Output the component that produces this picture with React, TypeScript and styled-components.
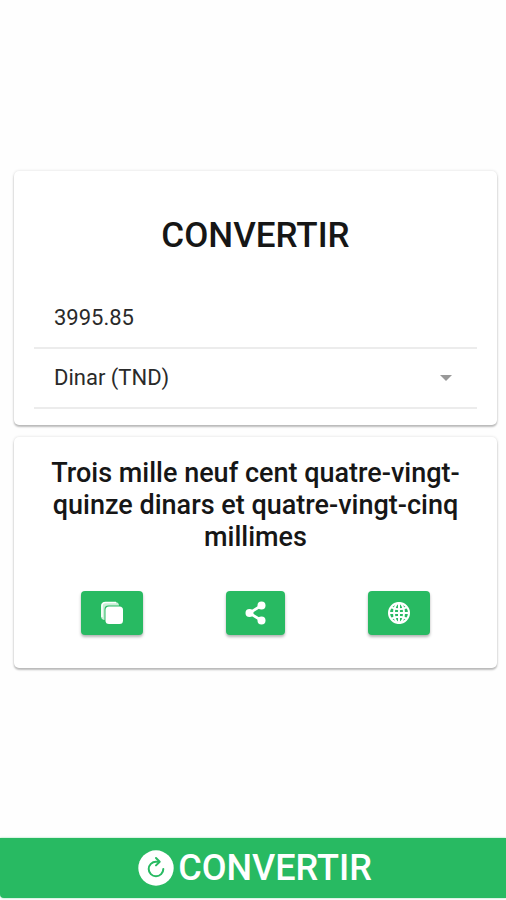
import React, { useState } from "react";
import styled, { createGlobalStyle } from "styled-components";

const green = "#28ba62";

const GlobalStyle = createGlobalStyle`
  *, *::before, *::after { box-sizing: border-box; }
  body {
    margin: 0;
    background: #fefefe;
    color: #161616;
    font-family: Roboto, "Liberation Sans", sans-serif;
  }
`;

const Page = styled.div`
  display: flex;
  flex-direction: column;
  min-height: 100vh;
  padding-bottom: 2px;
`;

const Content = styled.main`
  flex: 1;
  display: flex;
  flex-direction: column;
  justify-content: center;
  gap: 12px;
  padding: 0 9px 0 14px;
`;

const Card = styled.section`
  background: #fff;
  border-radius: 5px;
  box-shadow: 0 2px 2px rgba(0, 0, 0, 0.24), 0 0 3px rgba(0, 0, 0, 0.14);
`;

const FormCard = styled(Card)`
  padding: 44px 20px 16px;
`;

const ResultCard = styled(Card)`
  padding: 20px 26px 33px;
`;

const Title = styled.h1`
  margin: 0 0 32px;
  font-size: 35px;
  line-height: 42px;
  font-weight: 500;
  text-align: center;
`;

const Field = styled.div`
  display: flex;
  align-items: center;
  height: 60px;
  padding: 0 20px;
  border-bottom: 2px solid #ececec;
`;

const AmountInput = styled.input`
  width: 100%;
  padding: 0;
  border: 0;
  outline: 0;
  background: transparent;
  color: #2a2a2a;
  font: inherit;
  font-size: 22px;
  line-height: 28px;
`;

const CurrencySelect = styled.select`
  flex: 1;
  appearance: none;
  padding: 0;
  border: 0;
  outline: 0;
  background: transparent;
  color: #2a2a2a;
  font: inherit;
  font-size: 22px;
  line-height: 28px;
`;

const Caret = styled.svg`
  width: 12px;
  height: 6px;
  margin-right: 5px;
  fill: #999;
`;

const ResultText = styled.p`
  margin: 0 0 38px;
  font-size: 27px;
  line-height: 32px;
  font-weight: 500;
  text-align: center;
`;

const Actions = styled.div`
  display: grid;
  grid-template-columns: repeat(3, 1fr);
  justify-items: center;
`;

const ActionButton = styled.button`
  display: flex;
  align-items: center;
  justify-content: center;
  height: 44px;
  padding: 0 19px;
  border: 0;
  border-radius: 4px;
  background: ${green};
  color: #fff;
  box-shadow: 0 2px 3px rgba(0, 0, 0, 0.3);
  cursor: pointer;
`;

const ConvertButton = styled.button`
  display: flex;
  align-items: center;
  justify-content: center;
  gap: 4px;
  height: 60px;
  padding: 0 0 0 4px;
  border: 0;
  border-radius: 0 0 0 4px;
  background: ${green};
  box-shadow: 0 0 2px rgba(40, 186, 98, 0.6);
  color: #fff;
  font: inherit;
  font-size: 36px;
  line-height: 44px;
  font-weight: 500;
  cursor: pointer;
`;

const CopyIcon = () => (
  <svg width="24" height="24" viewBox="0 0 24 24" aria-hidden="true">
    <rect x="1" y="1" width="18" height="18" rx="4" fill="#c9efd7" />
    <path d="M2 16V5a3.500 3.500 0 0 1 3.500-3.500H16" fill="none" stroke="#fff" strokeWidth="1.500" />
    <rect x="4.500" y="4.500" width="19" height="19" rx="4" fill={green} />
    <rect x="5.500" y="5.500" width="17.500" height="17.500" rx="3.500" fill="#fff" />
  </svg>
);

const ShareIcon = () => (
  <svg width="21" height="24" viewBox="0 0 21 24" aria-hidden="true">
    <path d="M16.500 4.500 4.500 12l12 7.500" fill="none" stroke="#fff" strokeWidth="2.800" />
    <circle cx="16.500" cy="4.500" r="4" fill="#fff" />
    <circle cx="4.500" cy="12" r="4" fill="#fff" />
    <circle cx="16.500" cy="19.500" r="4" fill="#fff" />
  </svg>
);

const GlobeIcon = () => (
  <svg width="24" height="24" viewBox="0 0 24 24" fill="none" stroke="#fff" strokeWidth="2" aria-hidden="true">
    <circle cx="12" cy="12" r="10" />
    <ellipse cx="12" cy="12" rx="5" ry="10" />
    <path d="M12 2v20M2 12h20M4.500 6.300c4.500 2.400 10.500 2.400 15 0M4.500 17.700c4.500-2.400 10.500-2.400 15 0" />
  </svg>
);

const RefreshIcon = () => (
  <svg width="36" height="36" viewBox="0 0 36 36" aria-hidden="true">
    <circle cx="18" cy="18" r="17.700" fill="#fff" />
    <path d="M25.300 19a7.300 7.300 0 1 1-7.300-7.300h2.500" fill="none" stroke={green} strokeWidth="2" strokeLinecap="round" />
    <path d="m18 8 3.700 3.700L18 15.400" fill="none" stroke={green} strokeWidth="2" strokeLinecap="round" strokeLinejoin="round" />
  </svg>
);

export default function App() {
  const [amount, setAmount] = useState("3995.85");

  return (
    <>
      <GlobalStyle />
      <Page>
        <Content>
          <FormCard>
            <Title>CONVERTIR</Title>
            <Field>
              <AmountInput
                aria-label="Montant"
                inputMode="decimal"
                value={amount}
                onChange={(event) => setAmount(event.target.value)}
              />
            </Field>
            <Field>
              <CurrencySelect aria-label="Devise" defaultValue="TND">
                <option value="TND">Dinar (TND)</option>
              </CurrencySelect>
              <Caret viewBox="0 0 12 6" aria-hidden="true">
                <path d="M0 0h12L6 6z" />
              </Caret>
            </Field>
          </FormCard>
          <ResultCard>
            <ResultText>
              Trois mille neuf cent quatre-vingt-quinze dinars et quatre-vingt-cinq millimes
            </ResultText>
            <Actions>
              <ActionButton type="button" aria-label="Copier"><CopyIcon /></ActionButton>
              <ActionButton type="button" aria-label="Partager"><ShareIcon /></ActionButton>
              <ActionButton type="button" aria-label="Langue"><GlobeIcon /></ActionButton>
            </Actions>
          </ResultCard>
        </Content>
        <ConvertButton type="button">
          <RefreshIcon />
          CONVERTIR
        </ConvertButton>
      </Page>
    </>
  );
}
